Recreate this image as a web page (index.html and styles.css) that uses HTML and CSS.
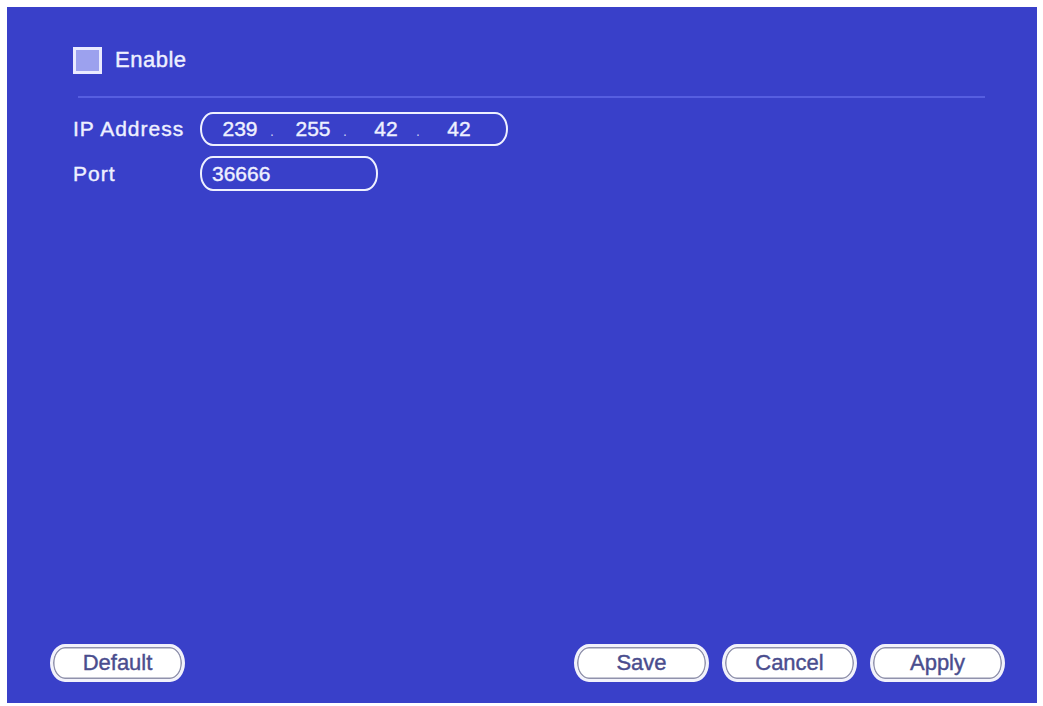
FILE: index.html
```html
<!DOCTYPE html>
<html lang="en">
<head>
    <meta charset="UTF-8">
    <meta name="viewport" content="width=device-width, initial-scale=1.0">
    <title>Multicast</title>
    <link rel="stylesheet" href="styles.css">
</head>
<body>
    <div class="panel">
        <div class="settings">
            <label class="enable-row">
                <span class="check"></span>
                <span class="enable-text">Enable</span>
            </label>
            <div class="divider"></div>
            <div class="fields">
                <span class="field-label">IP Address</span>
                <div class="field-box ip-box">
                    <span class="octet">239</span><span class="dot">.</span>
                    <span class="octet">255</span><span class="dot">.</span>
                    <span class="octet">42</span><span class="dot">.</span>
                    <span class="octet">42</span>
                </div>
                <span class="field-label">Port</span>
                <div class="field-box port-box">36666</div>
            </div>
        </div>
        <div class="footer">
            <button class="btn">Default</button>
            <div class="footer-right">
                <button class="btn">Save</button>
                <button class="btn">Cancel</button>
                <button class="btn">Apply</button>
            </div>
        </div>
    </div>
</body>
</html>
```

FILE: styles.css
```css
body { margin: 7px 6px 3px 7px; background-color: #ffffff; font-family: "Liberation Sans", Arial, sans-serif; }
.panel { height: 696px; background-color: #3940c9; display: flex; flex-direction: column; justify-content: space-between; box-shadow: 0 0 0 1px #d8d9ee; }
.settings { padding-top: 40px; }
.enable-row { display: flex; align-items: center; gap: 13px; margin-left: 66px; height: 26px; color: #eef0ff; -webkit-text-stroke: 0.4px #eef0ff; }
.check { width: 23px; height: 21px; background-color: #9ca1ee; border: 3px solid #e9eaff; }
.enable-text { font-size: 22px; letter-spacing: 0.5px; }
.divider { height: 2px; background-color: #565ee0; margin: 23px 52px 0 71px; }
.fields { display: grid; grid-template-columns: 127px auto; row-gap: 10px; align-items: center; justify-items: start; margin: 14px 0 0 66px; color: #eef0ff; -webkit-text-stroke: 0.4px #eef0ff; }
.field-label { font-size: 21px; letter-spacing: 1px; }
.field-box { box-sizing: border-box; height: 34px; border: 2.5px solid #eef0ff; border-radius: 13px / 17px; display: flex; align-items: center; font-size: 21px; }
.ip-box { width: 308px; padding-left: 8px; }
.port-box { width: 178px; height: 35px; padding-left: 10px; }
.octet { width: 60px; text-align: center; }
.dot { width: 13px; font-size: 14px; padding-top: 4px; color: #c8caf0; -webkit-text-stroke: 0; }
.footer { display: flex; align-items: center; padding: 0 32px 21px 43px; }
.footer-right { display: flex; gap: 13px; margin-left: auto; }
.btn { width: 135px; height: 38px; background-color: #ffffff; border: 3px solid #f2f2fb; border-radius: 15px / 19px; box-shadow: inset 0 0 0 1.5px #9092ac; color: #4a4d8e; -webkit-text-stroke: 0.4px #4a4d8e; font-family: "Liberation Sans", Arial, sans-serif; font-size: 22px; padding: 0; cursor: pointer; }
```
